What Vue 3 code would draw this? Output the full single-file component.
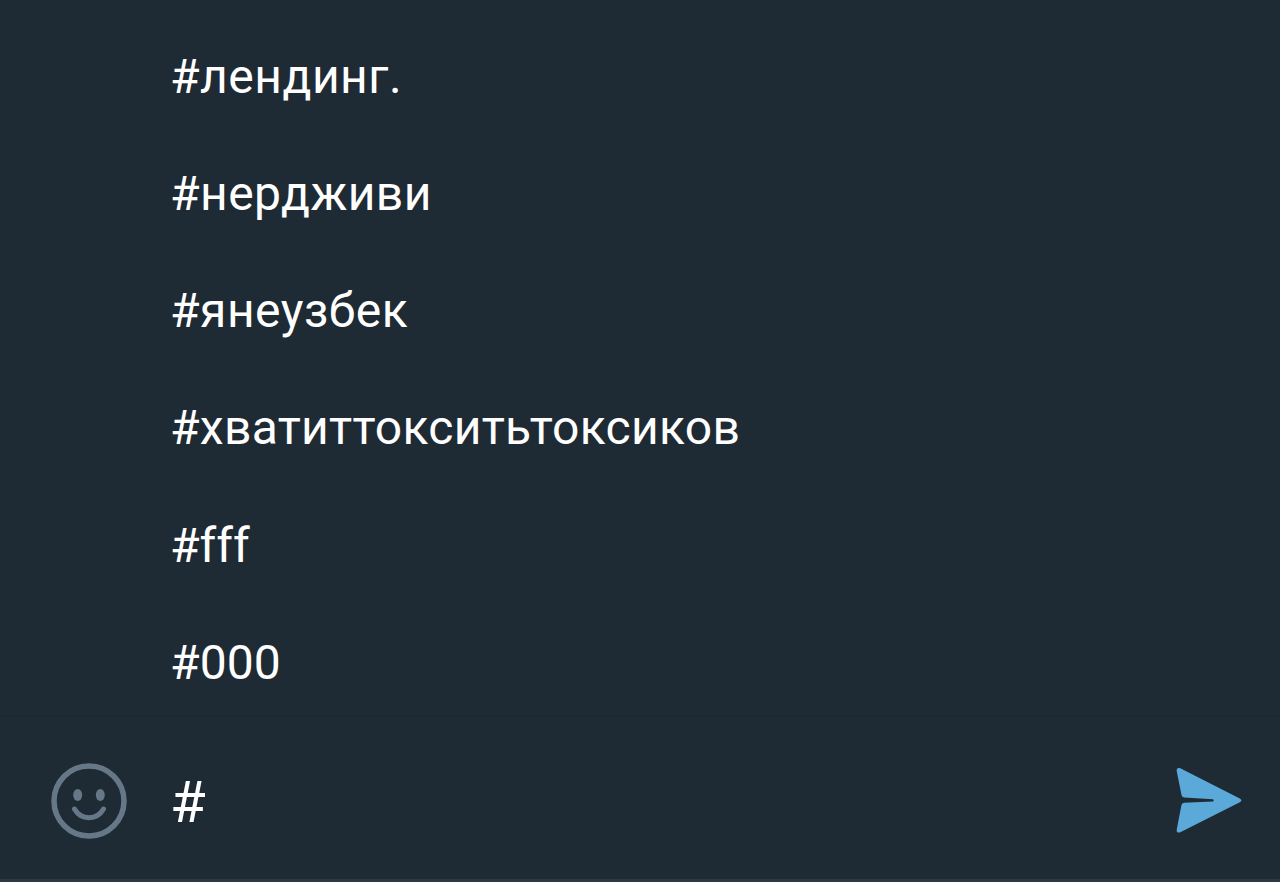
<script setup>
const tags = [
  { text: 'лендинг.', spacing: 0.5 },
  { text: 'нердживи', spacing: 0.45 },
  { text: 'янеузбек', spacing: 0.5 },
  { text: 'хватиттокситьтоксиков', spacing: 0.28 },
  { text: 'fff', spacing: 0 },
  { text: '000', spacing: 0.1 },
]
</script>

<template>
  <main class="screen">
    <ul class="tags">
      <li v-for="tag in tags" :key="tag.text" class="tag" :style="{ letterSpacing: tag.spacing + 'px' }">#{{ tag.text }}</li>
    </ul>
    <footer class="composer">
      <svg class="emoji" viewBox="0 0 80 80">
        <circle cx="40" cy="40" r="35" fill="none" stroke="#667888" stroke-width="5.5" />
        <ellipse cx="28.700" cy="34" rx="4.500" ry="6" fill="#667888" />
        <ellipse cx="51.300" cy="34" rx="4.500" ry="6" fill="#667888" />
        <path d="M25.500 48C32 59.500 48 59.500 54.500 48" fill="none" stroke="#667888" stroke-width="5" stroke-linecap="round" />
      </svg>
      <div class="input">#</div>
      <svg class="send" viewBox="0 0 68 68">
        <path d="M1.700 4C1.300 1.300 3.500.300 5.800 1.500L64.800 31.500Q68 33.400 64.800 35.300L5.800 65.100C3.500 66.300 1.300 65.300 1.700 62.700L6.400 38.200Q6.800 35.800 9.200 35.700L38 34.600Q39.600 33.400 38 32.300L9.200 30.500Q6.900 30.300 6.500 28Z" fill="#5ba9d9" />
      </svg>
    </footer>
  </main>
</template>

<style>
body { background: #1f2b34; }
</style>
<style scoped>
.screen {
  display: flex;
  flex-direction: column;
  height: 882px;
  box-sizing: border-box;
  overflow: hidden;
  background: #1f2b34;
  color: #fff;
  font-family: Roboto, sans-serif;
  border-bottom: 3px solid #303a3e;
}
.tags {
  list-style: none;
  margin: 0;
  padding: 17.600px 0 0 170px;
  height: 697.400px;
  flex: none;
}
.tag { height: 117.300px; line-height: 117px; font-size: 48px; white-space: nowrap; }
.composer {
  display: flex;
  align-items: center;
  flex: 1;
  border-top: 2px solid #1c2830;
  padding: 6px 37px 0 49px;
}
.emoji { width: 80px; height: 80px; }
.input { flex: 1; margin-left: 41px; padding-top: 3px; font-size: 58px; line-height: 80px; }
.send { width: 68px; height: 68px; }
</style>
